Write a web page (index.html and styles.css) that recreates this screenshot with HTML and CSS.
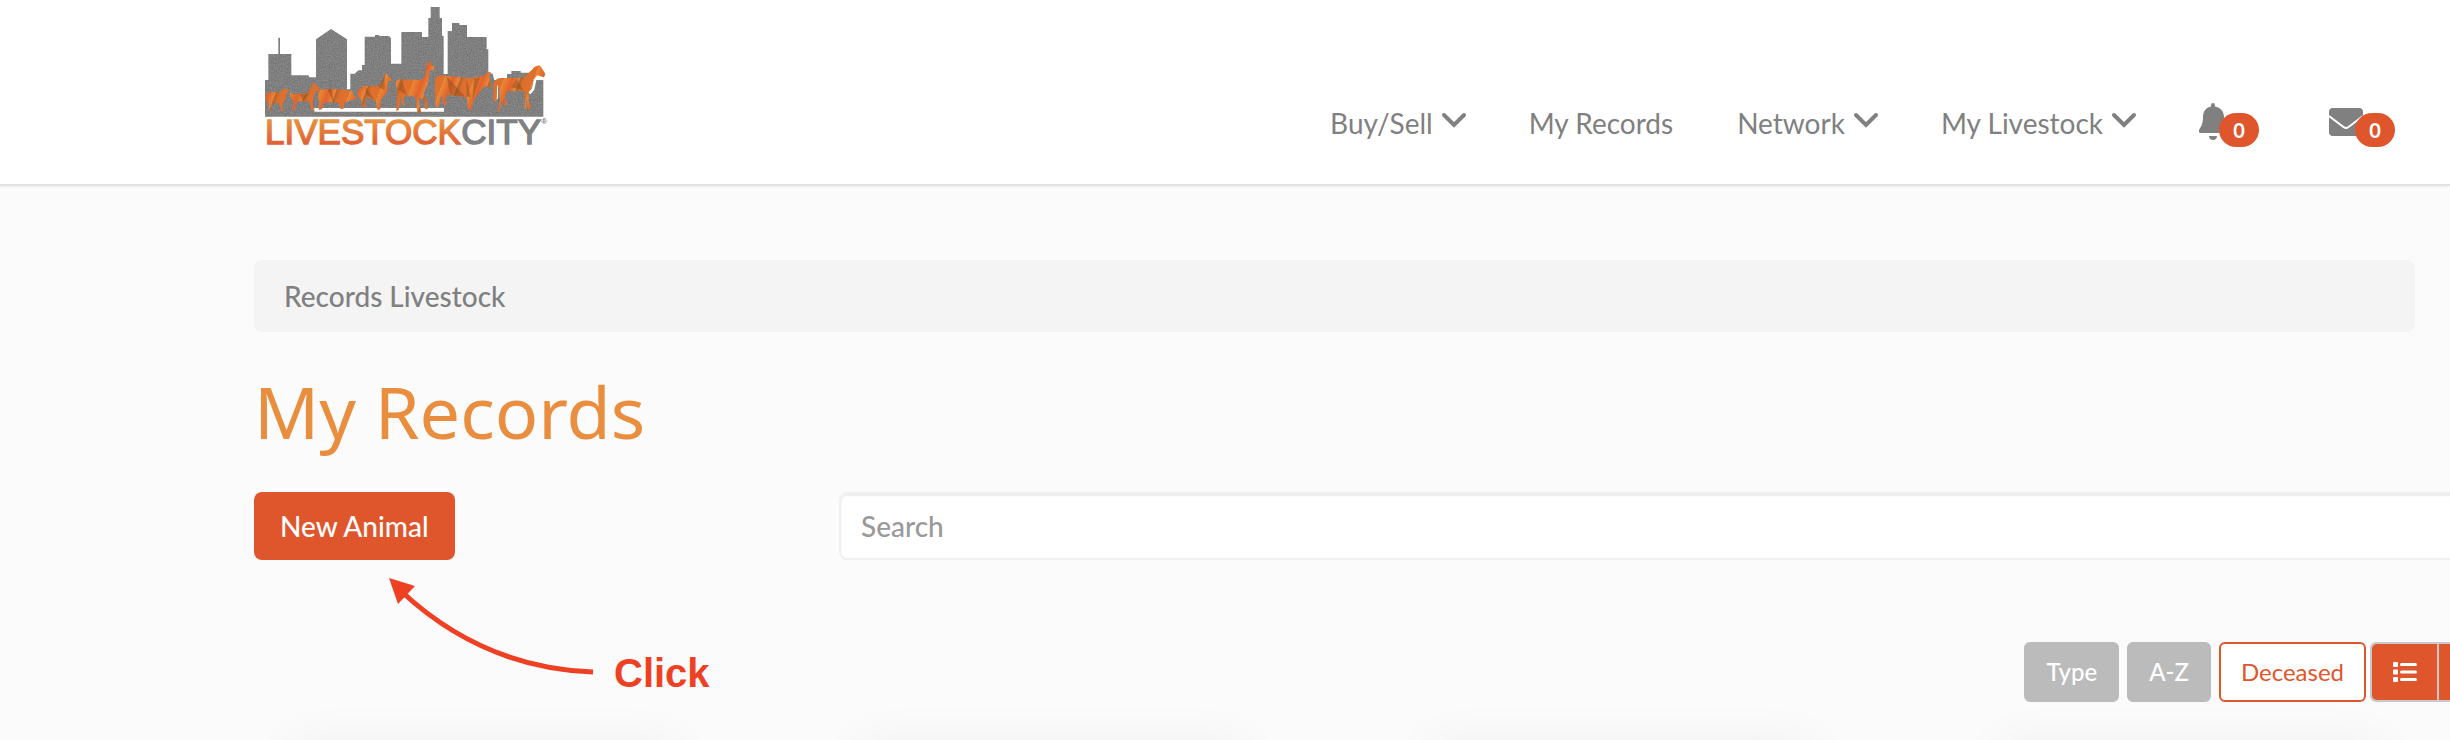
FILE: index.html
```html
<!DOCTYPE html>
<html lang="en">
<head>
<meta charset="utf-8">
<title>My Records - LivestockCity</title>
<link rel="stylesheet" href="styles.css">
</head>
<body>
<svg class="defs" aria-hidden="true">
  <symbol id="chevron" viewBox="0 0 26 16"><path d="M3 3l10 10L23 3" fill="none" stroke="currentColor" stroke-width="4" stroke-linecap="round" stroke-linejoin="miter"/></symbol>
</svg>
<header class="header">
  <a class="logo" href="#" aria-label="LivestockCity home">
    <svg viewBox="0 0 930 450">
      <defs>
        <linearGradient id="word" x1="0" y1="0" x2="0" y2="1"><stop offset=".15" stop-color="#e8963f"/><stop offset=".85" stop-color="#e05c33"/></linearGradient>
        <linearGradient id="facet" gradientUnits="userSpaceOnUse" x1="40" y1="250" x2="118" y2="280" spreadMethod="repeat">
          <stop offset="0" stop-color="#e98a35"/><stop offset=".3" stop-color="#e2622c"/><stop offset=".52" stop-color="#e8863a"/><stop offset=".56" stop-color="#b5642a"/><stop offset=".7" stop-color="#dd6f2c"/><stop offset="1" stop-color="#e0702e"/>
        </linearGradient>
        <filter id="grain" x="0" y="0" width="100%" height="100%" color-interpolation-filters="sRGB">
          <feTurbulence type="fractalNoise" baseFrequency=".25" numOctaves="2" seed="4"/>
          <feColorMatrix values=".5 0 0 0 .25 .5 0 0 0 .25 .5 0 0 0 .25 0 0 0 0 1"/>
          <feComposite in2="SourceGraphic" operator="in" result="n"/>
          <feComposite in="SourceGraphic" in2="n" operator="arithmetic" k2=".6" k3=".4"/>
        </filter>
      </defs>
      <path filter="url(#grain)" fill="#7f7f7f" d="M45 350V240H55V162H85V113H90V162H124V226H175L178 232H198V118L243 87L291 118V268H301V221H314L325 211H336V195H344V110H375V105H388V108H417L423 115V191H454V96H516V111H535V54H542V21H569V54H576V107H581V222H593V93H606V69H628V75H651V111H710V148H715V216L728 222L733 240H771V222H784V213H812V218H838V240H880V350Z"/>
      <path fill="#fff" d="M193 324H582V335H193Z"/>
      <path fill="none" stroke="#fff" stroke-width="8" d="M857 232L849 268L838 280M740 255V296"/>
      <g fill="url(#facet)">
        <path d="M47 281L60 277L92 276L98 268L112 267L118 270L110 280L107 296L101 306L97 318L100 332L94 334L87 310H68L63 318L64 330L55 331L57 312L48 300Z"/>
        <path d="M118 278L130 282L170 280L184 262L188 256L178 252L192 250L200 256L210 268L204 275L196 272L192 290L188 305L192 330L184 332L178 305L144 304L134 316L136 328L126 332V325L131 303L122 292Z"/>
        <path d="M207 270L240 266L290 270L298 272L308 272L310 284L318 290L316 298L295 304L283 308L281 326L272 328L266 308L232 306L218 312L216 328L206 330L208 305L204 290Z"/>
        <path d="M325 270L340 257L385 258L398 250L404 224L412 221L416 230L426 238L424 243L414 244L412 275L400 290L392 300L391 328L382 330L378 305L366 297L350 292L344 305L350 320L336 322L333 300L322 285Z"/>
        <path d="M437 243L450 238L510 240L524 232L530 195L528 187L538 190L540 182L545 196L556 204L552 210L539 212L534 250L520 282L530 296L533 327L526 328L522 300L508 292L508 310L514 338L502 339L497 292L468 284L460 298L466 315L458 316L452 290L446 330L439 334L441 285Z"/>
        <path d="M556 232L570 226L660 235L700 228L716 215L722 216L718 230L725 256L718 264L704 258L690 275L672 298L663 330L654 328L650 292L590 284L586 300L592 312L582 316L574 285L566 320L558 324L556 300L554 260Z"/>
        <path d="M731 250Q735 236 752 234L820 234L845 210L854 200L868 196L874 202L886 222L882 232L862 226L850 240L846 262L836 275L837 305L843 325L834 328L826 282L830 326L824 328L824 274L775 272L764 290L772 314L764 316L756 300L750 332L743 335L750 300L748 270L742 252L740 304L730 302Z"/>
      </g>
      <g fill="#8a4a1e" opacity=".45">
        <path d="M150 282L176 281L158 304ZM232 267L246 266L250 306ZM345 258L372 298L350 286ZM455 240L470 285L446 270ZM590 229L646 290L600 284ZM672 234L690 232L668 296ZM650 236L662 290L650 290ZM800 236L820 270L784 262ZM404 226L404 270L386 262Z"/>
      </g>
      <text class="logo-word" x="45" y="432" fill="url(#word)" stroke="url(#word)">LIVESTOCK</text>
      <text class="logo-word" x="634" y="432" fill="#7f8080" stroke="#7f8080">CITY</text>
      <text class="logo-mark" x="874" y="371">®</text>
    </svg>
  </a>
  <nav class="nav">
    <a href="#">Buy/Sell <svg class="chevron"><use href="#chevron"/></svg></a>
    <a href="#">My Records</a>
    <a href="#">Network <svg class="chevron"><use href="#chevron"/></svg></a>
    <a href="#">My Livestock <svg class="chevron"><use href="#chevron"/></svg></a>
    <a class="alert" href="#" aria-label="Notifications">
      <svg class="bell" viewBox="0 0 28 38"><path fill="currentColor" d="M14 0c1.500 0 2 1 2 3.500 5.500 1 9 5 9 10.500 0 8 1.500 10 3 13 .8 1.600 0 3-2 3H2c-2 0-2.800-1.400-2-3 1.500-3 4-5 4-13C4 8.500 7 4.500 12 3.500 12 1 12.500 0 14 0zM10 33h8c0 2.500-1.500 4-4 4s-4-1.500-4-4z"/></svg>
      <span class="badge">0</span>
    </a>
    <a class="alert" href="#" aria-label="Messages">
      <svg class="mail" viewBox="0 0 34 28"><rect width="34" height="28" rx="4" fill="currentColor"/><path d="M0 8l14.500 11q2.500 2 5 0L34 8" fill="none" stroke="#fff" stroke-width="2"/></svg>
      <span class="badge">0</span>
    </a>
  </nav>
</header>
<main class="main">
  <div class="breadcrumb">Records Livestock</div>
  <h1 class="title">My Records</h1>
  <div class="tools">
    <div class="action">
      <button class="btn-new" type="button">New Animal</button>
      <div class="callout">
        <svg class="arrow" viewBox="0 0 208 98"><path d="M14 14Q96 90 205 94" fill="none" stroke="#ee4023" stroke-width="5"/><path d="M1 0L27 8L10 26Z" fill="#ee4023"/></svg>
        <span class="callout-text">Click</span>
      </div>
    </div>
    <input class="search" type="search" placeholder="Search" aria-label="Search">
  </div>
  <div class="filters">
    <button class="btn-filter" type="button">Type</button>
    <button class="btn-filter" type="button">A-Z</button>
    <button class="btn-filter outline" type="button">Deceased</button>
    <div class="views">
      <button class="btn-view" type="button" aria-label="List view"><svg viewBox="0 0 24 20" fill="#fff"><rect width="5" height="5" rx="1"/><rect y="7.500" width="5" height="5" rx="1"/><rect y="15" width="5" height="5" rx="1"/><rect x="7" y="1" width="17" height="3" rx="1.500"/><rect x="7" y="8.500" width="17" height="3" rx="1.500"/><rect x="7" y="16" width="17" height="3" rx="1.500"/></svg></button>
      <button class="btn-view" type="button" aria-label="Grid view"><svg viewBox="0 0 24 20" fill="#fff"><rect width="11" height="9"/><rect x="13" width="11" height="9"/><rect y="11" width="11" height="9"/><rect x="13" y="11" width="11" height="9"/></svg></button>
    </div>
  </div>
  <div class="cards">
    <article class="card"></article>
    <article class="card"></article>
    <article class="card"></article>
    <article class="card"></article>
  </div>
</main>
</body>
</html>
```
FILE: styles.css
```css
* { box-sizing: border-box; }
html { overflow: hidden; }
body {
  margin: 0;
  overflow: hidden;
  background: #fbfbfb;
  color: #808080;
  font: 500 28px/40px Lato, sans-serif;
}
button, input { font: inherit; }
.defs { position: absolute; width: 0; height: 0; }

.header {
  display: flex;
  justify-content: space-between;
  min-height: 186px;
  padding: 0 55px 0 250px;
  background: #fff;
  border-bottom: 2px solid #e2e2e2;
  box-shadow: 0 1px 2px rgba(0, 0, 0, .05);
}
.logo svg { display: block; width: 310px; height: 150px; }
.logo-word { font: 105px "Liberation Sans", sans-serif; stroke-width: 4px; }
.logo-mark { font: 24px "Liberation Sans", sans-serif; fill: #555; }

.nav { display: flex; gap: 64px; padding-top: 103px; font-weight: 400; }
.nav a {
  display: flex;
  align-items: flex-start;
  gap: 8px;
  height: 52px;
  color: #808080;
  text-decoration: none;
  white-space: nowrap;
}
.chevron { width: 26px; height: 16px; margin: 9px -2px 0 0; }
.nav .alert { gap: 0; }
.alert + .alert { margin-left: 6px; }
.bell { width: 28px; height: 38px; }
.mail { width: 34px; height: 28px; margin-top: 5px; }
.badge {
  position: relative;
  min-width: 40px;
  height: 34px;
  margin: 10px 0 0 -8px;
  border-radius: 17px;
  background: #e0562c;
  color: #fff;
  font-size: 20px;
  font-weight: 700;
  line-height: 34px;
  text-align: center;
}

.main { padding: 74px 0 0 254px; }
.breadcrumb {
  margin-right: 35px;
  padding: 16px 30px;
  border-radius: 8px;
  background: #f4f4f4;
}
.title {
  margin: 29px 0 31px;
  color: #e88e3e;
  font: 72px/100px "Noto Sans", "Open Sans", sans-serif;
}
.tools {
  display: grid;
  grid-template-columns: 585px 1fr;
  align-items: start;
  margin-right: -56px;
}
.action { position: relative; }
.btn-new {
  height: 68px;
  padding: 0 26px;
  border: 0;
  border-radius: 8px;
  background: #e0562c;
  color: #fff;
}
.callout {
  position: absolute;
  top: 86px;
  left: 134px;
  display: flex;
  align-items: flex-start;
  gap: 18px;
}
.arrow { width: 208px; height: 98px; }
.callout-text {
  color: #ee4023;
  font: 700 40px/44px "Liberation Sans", sans-serif;
  padding-top: 73px;
}
.search {
  width: 100%;
  height: 68px;
  padding: 0 20px;
  border: 2px solid #f0f0f0;
  border-radius: 8px;
  background: #fff;
  box-shadow: inset 0 2px 2px rgba(0, 0, 0, .08);
}
.search::placeholder { color: #999; opacity: 1; }

.filters {
  display: flex;
  justify-content: flex-end;
  gap: 8px;
  margin: 82px -56px 0 0;
}
.btn-filter {
  height: 60px;
  padding: 0 20px;
  border: 2px solid #bbb;
  border-radius: 6px;
  background: #bbb;
  color: #fff;
  font-size: 24px;
}
.btn-filter.outline { border-color: #e0562c; background: #fff; color: #e0562c; font-weight: 400; }
.views {
  display: flex;
  gap: 2px;
  margin-left: -4px;
  padding: 2px;
  border-radius: 6px;
  background: #c8c8c8;
}
.btn-view {
  display: grid;
  place-items: center;
  width: 65px;
  height: 56px;
  padding: 0;
  border: 0;
  background: #e0562c;
}
.btn-view:first-child { border-radius: 5px 0 0 5px; }
.btn-view svg { width: 24px; height: 20px; }

.cards {
  display: grid;
  grid-template-columns: repeat(4, 1fr);
  gap: 190px;
  margin: 44px 70px 0 40px;
}
.card { height: 400px; background: #fff; box-shadow: 0 0 50px rgba(0, 0, 0, .06); }
```
